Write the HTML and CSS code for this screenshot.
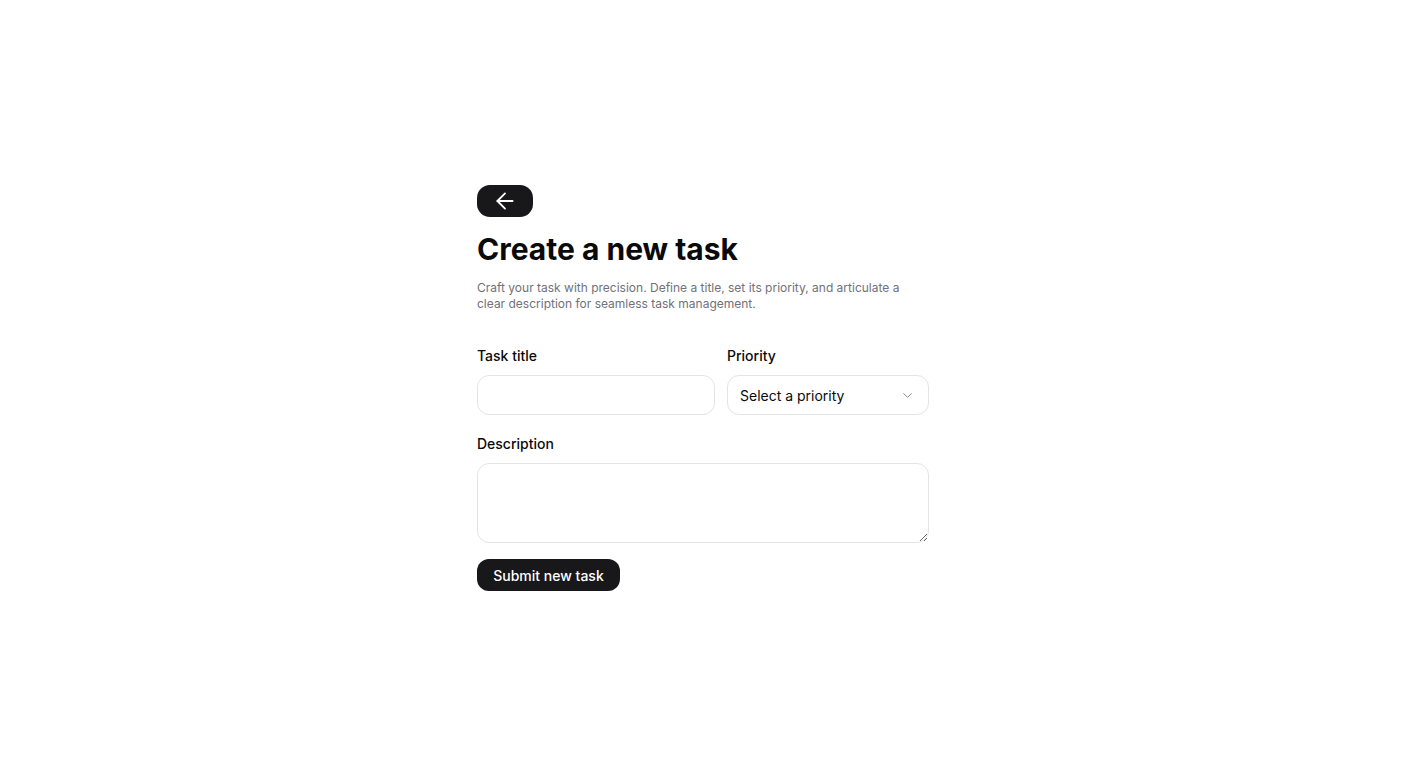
FILE: index.html
```html
<!DOCTYPE html>
<html lang="en">
<head>
<meta charset="utf-8">
<title>Create a new task</title>
<link rel="stylesheet" href="styles.css">
</head>
<body>
<main class="page">
  <div class="wrap">
    <button class="back" type="button" aria-label="Back">
      <svg width="26" height="26" viewBox="0 0 24 24" fill="none" stroke="#fff" stroke-width="1.7" stroke-linecap="round" stroke-linejoin="round"><path d="M19 12H5"/><path d="M12 19l-7-7 7-7"/></svg>
    </button>
    <h1 class="title">Create a new task</h1>
    <p class="lead">Craft your task with precision. Define a title, set its priority, and articulate a clear description for seamless task management.</p>
    <form class="form">
      <div class="row">
        <div class="field grow">
          <label class="label" for="t">Task title</label>
          <input class="input" id="t" type="text">
        </div>
        <div class="field prio">
          <label class="label">Priority</label>
          <div class="select">
            <span>Select a priority</span>
            <svg width="15" height="15" viewBox="0 0 24 24" fill="none" stroke="#8a8a8a" stroke-width="1.6" stroke-linecap="round" stroke-linejoin="round"><path d="M6 9l6 6 6-6"/></svg>
          </div>
        </div>
      </div>
      <div class="field">
        <label class="label" for="d">Description</label>
        <textarea class="textarea" id="d"></textarea>
      </div>
      <div class="actions"><button class="submit" type="button">Submit new task</button></div>
    </form>
  </div>
</main>
</body>
</html>
```
FILE: styles.css
```css
* { box-sizing: border-box; }
html, body { margin: 0; padding: 0; background: #fff; }
body { font-family: Inter, "Noto Sans", sans-serif; color: #0a0a0a; }
.page { display: flex; justify-content: center; padding-top: 185px; }
.wrap { width: 452px; display: flex; flex-direction: column; }
.back {
  width: 56px; height: 32px; border: 0; border-radius: 13px;
  background: #18181b; display: flex; align-items: center; justify-content: center;
  padding: 0; cursor: pointer;
}
.title { font-size: 30px; line-height: 36px; font-weight: 700; margin: 14px 0 0; letter-spacing: 0; }
.lead { font-size: 12px; line-height: 16px; color: #71717a; margin: 13px 0 0; }
.form { margin-top: 34px; display: flex; flex-direction: column; gap: 19px; }
.row { display: flex; gap: 12px; }
.field { display: flex; flex-direction: column; gap: 9px; }
.grow { flex: 1; }
.prio { width: 202px; }
.label { font-size: 14px; line-height: 20px; font-weight: 500; }
.input, .select, .textarea {
  border: 1px solid #e4e4e7; border-radius: 12px; background: #fff;
  font-family: inherit; font-size: 14px;
}
.input { height: 40px; width: 100%; padding: 0 12px; }
.select { height: 40px; display: flex; align-items: center; justify-content: space-between; padding: 0 13px 0 12px; }
.textarea { height: 80px; width: 100%; resize: vertical; padding: 8px 12px; }
.actions { margin-top: -3px; }
.submit {
  height: 32px; padding: 0 16px; width: 143px; border: 0; border-radius: 12px;
  background: #18181b; color: #fff; font-family: inherit; font-size: 14px; font-weight: 500;
}
```
